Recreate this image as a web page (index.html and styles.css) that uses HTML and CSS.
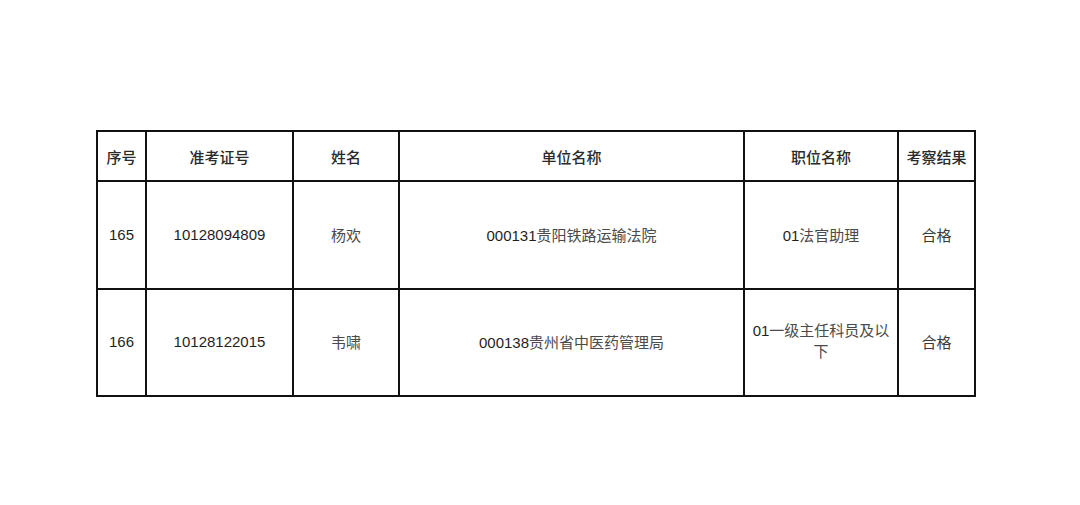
FILE: index.html
```html
<!DOCTYPE html>
<html lang="zh">
<head>
<meta charset="utf-8">
<link rel="stylesheet" href="styles.css">
</head>
<body>
<div class="page">
  <table class="result">
    <colgroup>
      <col class="c1"><col class="c2"><col class="c3"><col class="c4"><col class="c5"><col class="c6">
    </colgroup>
    <thead>
      <tr class="head">
        <th>序号</th><th>准考证号</th><th>姓名</th><th>单位名称</th><th>职位名称</th><th>考察结果</th>
      </tr>
    </thead>
    <tbody>
      <tr class="row">
        <td>165</td><td>10128094809</td><td class="cn">杨欢</td><td>000131<span class="cn">贵阳铁路运输法院</span></td><td>01<span class="cn">法官助理</span></td><td class="ok">合格</td>
      </tr>
      <tr class="row last">
        <td>166</td><td>10128122015</td><td class="cn">韦啸</td><td>000138<span class="cn">贵州省中医药管理局</span></td><td class="wrap">01<span class="cn">一级主任科员及以下</span></td><td class="ok">合格</td>
      </tr>
    </tbody>
  </table>
</div>
</body>
</html>
```

FILE: styles.css
```css
html, body {
  margin: 0;
  padding: 0;
  background: #ffffff;
}
.page {
  padding: 130px 0 0 96px;
}
.result {
  border-collapse: collapse;
  table-layout: fixed;
  width: 878px;
  font-family: "Liberation Sans", "Noto Sans CJK SC", sans-serif;
  color: #1f1f1f;
}
.c1 { width: 49px; }
.c2 { width: 147px; }
.c3 { width: 106px; }
.c4 { width: 345px; }
.c5 { width: 154px; }
.c6 { width: 77px; }
.result th, .result td {
  border: 2px solid #111111;
  text-align: center;
  vertical-align: middle;
  padding: 0;
}
.head th {
  height: 48px;
  font-family: "Noto Sans CJK SC", sans-serif;
  font-size: 15px;
  font-weight: 500;
  color: #2a2a2a;
  padding-bottom: 0;
}
.row td {
  height: 104px;
  font-size: 15px;
  padding-bottom: 2px;
}
.row.last td {
  height: 101px;
}
.cn {
  font-family: "Noto Sans CJK SC", sans-serif;
  color: #4a4a4a;
}
.result td.wrap {
  line-height: 20px;
  padding: 0 6px 4px;
}
.ok {
  font-family: "Noto Sans CJK SC", sans-serif;
  font-size: 17px;
  color: #3a3a3a;
}
```
